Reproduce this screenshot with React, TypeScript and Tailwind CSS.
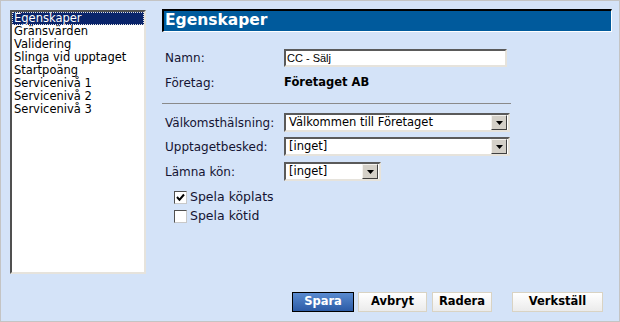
import React from 'react';

const items = [
  'Egenskaper',
  'Gränsvärden',
  'Validering',
  'Slinga vid upptaget',
  'Startpoäng',
  'Servicenivå 1',
  'Servicenivå 2',
  'Servicenivå 3',
];

const font = { fontFamily: '"DejaVu Sans", Verdana, sans-serif' };

function DropButton() {
  return (
    <div className="w-[16px] h-[15px] bg-[#d4d0c8] border border-t-[#f4f2ee] border-l-[#f4f2ee] border-r-[#404040] border-b-[#404040] flex items-center justify-center">
      <svg width="7" height="4" viewBox="0 0 7 4">
        <path d="M0 0 H7 L3.5 4 Z" fill="#000" />
      </svg>
    </div>
  );
}

function Select({ value, width }: { value: string; width: string }) {
  return (
    <div
      className={`${width} h-[19px] bg-white border-2 border-t-[#5a5a5a] border-l-[#5a5a5a] border-r-[#e6e3dc] border-b-[#e6e3dc] flex items-center justify-between pl-[3px] pr-[1px]`}
    >
      <span className="text-[11.5px] text-black leading-none">{value}</span>
      <DropButton />
    </div>
  );
}

function Checkbox({ checked, label }: { checked: boolean; label: string }) {
  return (
    <div className="flex items-center h-[13px] pl-[12px]">
      <div className="w-[13px] h-[13px] bg-white border border-t-[#505050] border-l-[#505050] border-r-[#c8c8c8] border-b-[#c8c8c8] flex items-center justify-center">
        {checked && (
          <svg width="9" height="9" viewBox="0 0 9 9">
            <path d="M1 4 L3.5 6.8 L8 1.5" stroke="#000" strokeWidth="2" fill="none" />
          </svg>
        )}
      </div>
      <span className="ml-[3px] text-[12.5px] text-[#141433]">{label}</span>
    </div>
  );
}

function Button({ label, primary, width }: { label: string; primary?: boolean; width: string }) {
  if (primary) {
    return (
      <div className={`${width} h-[20px] border border-black bg-gradient-to-b from-[#5a8bd0] to-[#2c5ba6] flex items-center justify-center`}>
        <span className="text-[11.5px] font-bold text-white">{label}</span>
      </div>
    );
  }
  return (
    <div className={`${width} h-[20px] border border-[#d9d3c3] bg-gradient-to-b from-white to-[#ebebeb] flex items-center justify-center`}>
      <span className="text-[11.5px] font-bold text-black">{label}</span>
    </div>
  );
}

export default function App() {
  return (
    <div
      className="w-[620px] h-[322px] bg-[#d4e3f8] border border-[#c4c4c4] pl-[9px] pt-[8px] flex flex-col"
      style={font}
    >
      <div className="flex items-start">
        {/* List */}
        <div className="mt-[1px] w-[136px] h-[264px] bg-white border-2 border-t-[#505050] border-l-[#505050] border-r-[#e6e3dc] border-b-[#e6e3dc]">
          {items.map((item, i) => (
            <div
              key={item}
              className={`h-[13px] leading-[13px] text-[11.5px] pl-[2px] whitespace-nowrap ${
                i === 0
                  ? 'bg-[#0a246a] text-white outline outline-1 outline-dotted outline-[#e0e0e0] -outline-offset-1'
                  : 'text-black'
              }`}
            >
              {item}
            </div>
          ))}
        </div>

        {/* Panel */}
        <div className="ml-[16px] w-[450px] flex flex-col">
          <div className="h-[23px] bg-[#005a9c] border-t-2 border-l-2 border-t-black border-l-black border-r border-b border-r-white border-b-white flex items-center pl-[1px]">
            <span className="text-[15.5px] font-bold text-white leading-none">Egenskaper</span>
          </div>

          <div className="pl-[3px] flex flex-col">
            <div className="mt-[17px] flex items-center h-[18px]">
              <span className="w-[119px] text-[12px] text-[#141433]">Namn:</span>
              <div className="w-[223px] h-[18px] bg-white border-2 border-t-[#5a5a5a] border-l-[#5a5a5a] border-r-[#e6e3dc] border-b-[#e6e3dc] flex items-center pl-[1px]">
                <span className="text-[11px] text-black" style={{ fontFamily: '"Liberation Sans", Arial, sans-serif' }}>
                  CC - Sälj
                </span>
              </div>
            </div>

            <div className="mt-[7px] flex items-center h-[18px]">
              <span className="w-[119px] text-[12px] text-[#141433]">Företag:</span>
              <span className="text-[11.5px] font-bold text-black">Företaget AB</span>
            </div>
          </div>

          <div className="mt-[11px] w-[349px] h-[1px] bg-[#8a8a8a]" />

          <div className="pl-[3px] flex flex-col">
            <div className="mt-[9px] flex items-center">
              <span className="w-[119px] text-[12px] text-[#141433] whitespace-nowrap">Välkomsthälsning:</span>
              <Select value="Välkommen till Företaget" width="w-[226px]" />
            </div>
            <div className="mt-[5px] flex items-center">
              <span className="w-[119px] text-[12px] text-[#141433]">Upptagetbesked:</span>
              <Select value="[inget]" width="w-[226px]" />
            </div>
            <div className="mt-[6px] flex items-center">
              <span className="w-[119px] text-[12px] text-[#141433]">Lämna kön:</span>
              <Select value="[inget]" width="w-[97px]" />
            </div>
          </div>

          <div className="mt-[10px] flex flex-col gap-[6px]">
            <Checkbox checked label="Spela köplats" />
            <Checkbox checked={false} label="Spela kötid" />
          </div>
        </div>
      </div>

      {/* Buttons */}
      <div className="mt-[18px] flex pl-[282px]">
        <Button label="Spara" primary width="w-[62px]" />
        <div className="ml-[4px]">
          <Button label="Avbryt" width="w-[69px]" />
        </div>
        <div className="ml-[5px]">
          <Button label="Radera" width="w-[60px]" />
        </div>
        <div className="ml-[20px]">
          <Button label="Verkställ" width="w-[91px]" />
        </div>
      </div>
    </div>
  );
}
